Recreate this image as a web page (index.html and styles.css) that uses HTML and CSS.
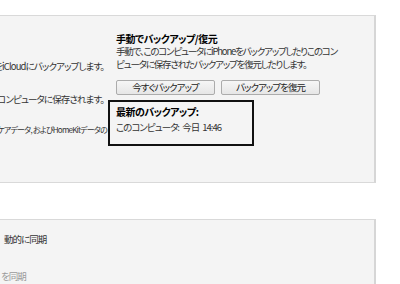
FILE: index.html
```html
<!DOCTYPE html>
<html lang="ja">
<head>
<meta charset="utf-8">
<link rel="stylesheet" href="styles.css">
</head>
<body>
<div class="page">
  <section class="panel panel-backup">
    <div class="col-left">
      <div class="row row-icloud"><span>iPhone上の最も重要なデータをiCloudにバックアップします。</span></div>
      <div class="row row-local"><span>iPhoneの完全なバックアップはこのコンピュータに保存されます。</span></div>
      <div class="row row-enc"><span>これにより、アカウントパスワード、ヘルスケアデータ, およびHomeKitデータの</span></div>
    </div>
    <div class="col-right">
      <h3 class="title">手動でバックアップ/復元</h3>
      <p class="desc">手動で、このコンピュータにiPhoneをバックアップしたりこのコン<br>ピュータに保存されたバックアップを復元したりします。</p>
      <div class="buttons">
        <button class="btn">今すぐバックアップ</button>
        <button class="btn">バックアップを復元</button>
      </div>
      <div class="latest">
        <div class="latest-title">最新のバックアップ:</div>
        <div class="latest-value">このコンピュータ: 今日 14:46</div>
      </div>
    </div>
  </section>
  <section class="panel panel-options">
    <div class="opt">動的に同期</div>
    <div class="opt opt-disabled">を同期</div>
  </section>
</div>
</body>
</html>
```
FILE: styles.css
```css
html, body {
  margin: 0;
  padding: 0;
  background: #ffffff;
  overflow: hidden;
}
body {
  font-family: "Noto Sans CJK JP", "Noto Sans", sans-serif;
  font-size: 9.5px;
  line-height: 13px;
  letter-spacing: -1px;
  color: #333333;
  font-feature-settings: "palt";
  width: 400px;
  height: 284px;
}
.page {
  padding-top: 15px;
  margin-left: -10px;
  width: 386px;
}
.panel {
  box-sizing: border-box;
  background: #f4f4f4;
  border: 1px solid #d9d9d9;
  border-right: 2px solid #d6d6d6;
}
.panel-backup {
  height: 168px;
  display: grid;
  grid-template-columns: 125px 1fr;
}
.col-left {
  overflow: hidden;
  padding-right: 12px;
  padding-top: 44px;
  letter-spacing: -0.9px;
}
.row {
  display: flex;
  justify-content: flex-end;
  white-space: nowrap;
}
.row-local { margin-top: 20px; }
.row-enc {
  margin-top: 17px;
  font-size: 8px;
  letter-spacing: -0.8px;
  margin-right: -3px;
}
.col-right {
  padding-top: 16px;
  white-space: nowrap;
}
.title {
  margin: 0;
  font-size: 10px;
  font-weight: bold;
  letter-spacing: -0.5px;
  color: #000000;
  line-height: 13px;
}
.desc {
  margin: 0;
  letter-spacing: -1.2px;
}
.buttons {
  display: flex;
  gap: 6px;
  margin-top: 9px;
}
.btn {
  box-sizing: border-box;
  width: 99px;
  height: 15px;
  padding: 0;
  font-family: inherit;
  font-size: 9.5px;
  letter-spacing: -1px;
  line-height: 13px;
  color: #222;
  font-feature-settings: "palt";
  background: linear-gradient(#f6f6f6, #e6e6e6);
  border: 1px solid #acacac;
  border-radius: 2px;
}
.latest {
  box-sizing: border-box;
  margin-top: 5px;
  margin-left: -8px;
  width: 146px;
  height: 46px;
  border: 2px solid #111111;
  padding: 3px 6px 0;
}
.latest-title {
  font-weight: bold;
  font-size: 10px;
  letter-spacing: -0.5px;
  color: #000;
}
.latest-value {
  margin-top: 3px;
  word-spacing: 2px;
}
.panel-options {
  margin-top: 36px;
  height: 66px;
  padding-top: 13px;
  padding-left: 13px;
}
.opt-disabled {
  margin-top: 24px;
  margin-left: -3px;
  color: #9a9a9a;
}
```
